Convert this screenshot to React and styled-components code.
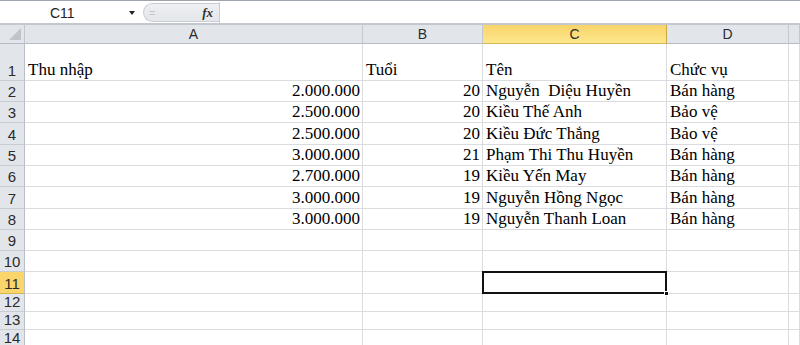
import React from "react";
import styled, { createGlobalStyle } from "styled-components";

const GlobalStyle = createGlobalStyle`
  html, body {
    margin: 0;
    padding: 0;
    background: #ffffff;
    overflow: hidden;
  }
`;

const Window = styled.div`
  width: 800px;
  height: 345px;
  overflow: hidden;
  background: #ffffff;
  font-family: "Liberation Sans", Arial, sans-serif;
`;

const FormulaBar = styled.div`
  display: flex;
  align-items: stretch;
  height: 21px;
  border-top: 1px solid #9ea4ab;
  border-bottom: 2px solid #c3c8ce;
  background: #ffffff;
  padding-top: 1px;
  box-sizing: content-box;
`;

const NameBox = styled.div`
  width: 143px;
  display: flex;
  align-items: center;
  font-size: 14px;
  color: #1e1e1e;
`;

const NameText = styled.span`
  margin-left: 50px;
  flex: 1;
`;

const DropArrow = styled.span`
  width: 0;
  height: 0;
  margin-right: 8px;
  border-left: 3.5px solid transparent;
  border-right: 3.5px solid transparent;
  border-top: 4px solid #222;
`;

const FxPill = styled.div`
  width: 76px;
  margin: 1px 0;
  display: flex;
  align-items: center;
  justify-content: space-between;
  padding: 0 6px 0 5px;
  box-sizing: border-box;
  background: linear-gradient(#eef0f3, #e3e6ea);
  border: 1px solid #c9cdd3;
  border-right: none;
  border-radius: 10px 0 0 10px;
`;

const EqualSign = styled.span`
  font-size: 11px;
  color: #c2c6cc;
`;

const FxLabel = styled.span`
  font-family: "Liberation Serif", "Times New Roman", serif;
  font-style: italic;
  font-weight: bold;
  font-size: 13px;
  color: #333;
`;

const FormulaInput = styled.div`
  flex: 1;
  border-left: 1px solid #c9cdd3;
  background: #ffffff;
`;

const Sheet = styled.div`
  display: grid;
  grid-template-columns: 25px 338px 120px 184px 122px 1fr;
  grid-template-rows: ${(p) => p.$rows};
`;

const Corner = styled.div`
  position: relative;
  background: #e2e6eb;
  border-right: 1px solid #c0c6cd;
  border-bottom: 1px solid #b6bcc4;
  &::after {
    content: "";
    position: absolute;
    right: 3px;
    bottom: 3px;
    width: 0;
    height: 0;
    border-left: 12px solid transparent;
    border-bottom: 12px solid #bfc4cb;
  }
`;

const ColHeader = styled.div`
  display: flex;
  align-items: center;
  justify-content: center;
  font-size: 14px;
  color: #2b2b2b;
  background: ${(p) =>
    p.$active ? "linear-gradient(#f8d46a, #fde78c)" : "#e2e6eb"};
  border-right: 1px solid ${(p) => (p.$active ? "#c9a94a" : "#c3c9d0")};
  border-bottom: 1px solid ${(p) => (p.$active ? "#d8b553" : "#b6bcc4")};
`;

const RowHeader = styled.div`
  display: flex;
  align-items: flex-end;
  justify-content: center;
  padding-bottom: 1px;
  font-size: 15px;
  line-height: 17px;
  color: #2b2b2b;
  background: ${(p) => (p.$active ? "#f9d56b" : "#e2e6eb")};
  border-right: 1px solid #b9bfc7;
  border-bottom: 1px solid ${(p) => (p.$active ? "#d8b553" : "#c8cdd3")};
`;

const Cell = styled.div`
  position: relative;
  display: flex;
  align-items: flex-end;
  justify-content: ${(p) => (p.$right ? "flex-end" : "flex-start")};
  padding: 0 2px 0 3px;
  font-family: "Liberation Serif", "Times New Roman", serif;
  font-size: 17px;
  line-height: 20px;
  color: #000;
  white-space: pre;
  border-right: 1px solid #dadcdf;
  border-bottom: 1px solid #dadcdf;

  ${(p) =>
    p.$selected &&
    `
    &::after {
      content: "";
      position: absolute;
      top: -1px;
      left: -1px;
      right: -1px;
      bottom: -1px;
      border: 2px solid #111;
      z-index: 2;
    }
    &::before {
      content: "";
      position: absolute;
      right: -3px;
      bottom: -3px;
      width: 5px;
      height: 5px;
      background: #111;
      border: 1px solid #fff;
      box-sizing: border-box;
      z-index: 3;
    }
  `}
`;

const rowHeights = [37, 21, 21, 22, 21, 21, 22, 21, 21, 21, 22, 18, 18, 18];

const data = [
  ["Thu nhập", "Tuổi", "Tên", "Chức vụ"],
  ["2.000.000", "20", "Nguyễn  Diệu Huyền", "Bán hàng"],
  ["2.500.000", "20", "Kiều Thế Anh", "Bảo vệ"],
  ["2.500.000", "20", "Kiều Đức Thắng", "Bảo vệ"],
  ["3.000.000", "21", "Phạm Thi Thu Huyền", "Bán hàng"],
  ["2.700.000", "19", "Kiều Yến May", "Bán hàng"],
  ["3.000.000", "19", "Nguyễn Hồng Ngọc", "Bán hàng"],
  ["3.000.000", "19", "Nguyễn Thanh Loan", "Bán hàng"],
];

const columns = ["A", "B", "C", "D", ""];

export default function App() {
  const rows = `19px ${rowHeights.map((h) => h + "px").join(" ")}`;
  return (
    <Window>
      <GlobalStyle />
      <FormulaBar>
        <NameBox>
          <NameText>C11</NameText>
          <DropArrow />
        </NameBox>
        <FxPill>
          <EqualSign>=</EqualSign>
          <FxLabel>fx</FxLabel>
        </FxPill>
        <FormulaInput />
      </FormulaBar>
      <Sheet $rows={rows}>
        <Corner />
        {columns.map((c) => (
          <ColHeader key={c || "E"} $active={c === "C"}>
            {c}
          </ColHeader>
        ))}
        {rowHeights.map((_, i) => {
          const r = i + 1;
          const row = data[i] || ["", "", "", ""];
          const header = i === 0;
          return (
            <React.Fragment key={r}>
              <RowHeader $active={r === 11}>{r}</RowHeader>
              <Cell $right={!header}>{row[0]}</Cell>
              <Cell $right={!header}>{row[1]}</Cell>
              <Cell $selected={r === 11}>{row[2]}</Cell>
              <Cell>{row[3]}</Cell>
              <Cell />
            </React.Fragment>
          );
        })}
      </Sheet>
    </Window>
  );
}
